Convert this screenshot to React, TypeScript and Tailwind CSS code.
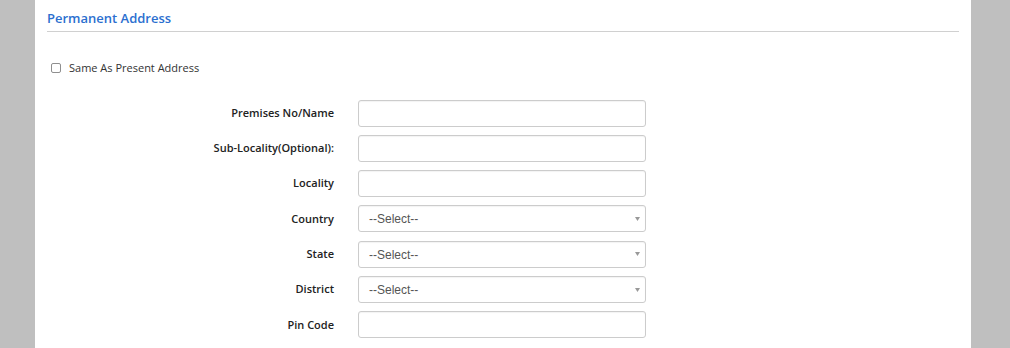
import React from "react";

const Arrow = () => (
  <svg className="pointer-events-none absolute right-[5px] top-1/2 -translate-y-1/2" width="5" height="4" viewBox="0 0 5 4">
    <path d="M0 0H5L2.5 4Z" fill="#999" />
  </svg>
);

const rows: { label: string; select?: boolean }[] = [
  { label: "Premises No/Name" },
  { label: "Sub-Locality(Optional):" },
  { label: "Locality" },
  { label: "Country", select: true },
  { label: "State", select: true },
  { label: "District", select: true },
  { label: "Pin Code" },
];

export default function App() {
  return (
    <div className="flex h-[348px] w-[1010px] justify-center overflow-hidden bg-[#bfbfbf]" style={{ fontFamily: '"Open Sans", sans-serif' }}>
      <div className="ml-[-4px] w-[936px] bg-white px-[12px]">
        <div className="border-b border-[#d0d0d0] pt-[10px] pb-[4px]">
          <h3 className="text-[13px] font-semibold leading-[17px] text-[#2b6fcf]">Permanent Address</h3>
        </div>
        <label className="mt-[28px] flex items-center gap-[8px] pl-[4px] text-[11px] text-[#333]">
          <span className="h-[10px] w-[10px] rounded-[2px] border border-[#8f8f8f] bg-white" />
          <span>Same As Present Address</span>
        </label>
        <div className="mt-[23px] flex flex-col gap-[8.33px]">
          {rows.map((r) => (
            <div key={r.label} className="flex items-center">
              <div className="w-[287px] text-right text-[11px] font-semibold text-[#222]">{r.label}</div>
              <div className="relative ml-[24px] h-[27px] w-[288px] rounded-[3px] border border-[#cccccc] bg-white shadow-[inset_0_1px_1px_rgba(0,0,0,0.05)]">
                {r.select && (
                  <>
                    <span className="absolute left-[10px] top-[6px] text-[12px] leading-[14px] text-[#555]" style={{ fontFamily: '"Liberation Sans", Arial, sans-serif' }}>
                      --Select--
                    </span>
                    <Arrow />
                  </>
                )}
              </div>
            </div>
          ))}
        </div>
      </div>
    </div>
  );
}
